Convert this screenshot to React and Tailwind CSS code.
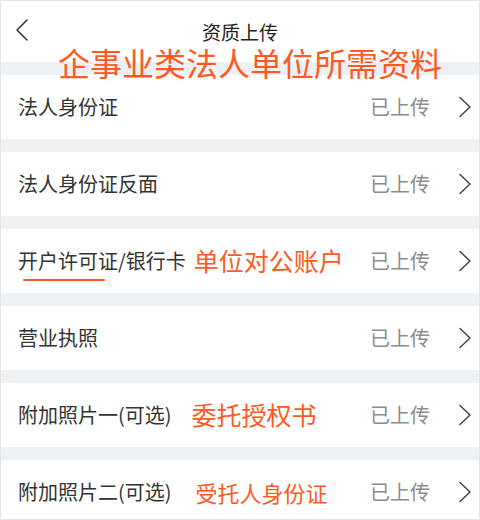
import React from "react";

const rows = [
  { label: "法人身份证" },
  { label: "法人身份证反面" },
  { label: "开户许可证/银行卡", note: "单位对公账户", noteClass: "ml-[8px] text-[25px]", underline: true },
  { label: "营业执照" },
  { label: "附加照片一(可选)", note: "委托授权书", noteClass: "ml-[20px] text-[25px]" },
  { label: "附加照片二(可选)", note: "受托人身份证", noteClass: "ml-[24px] text-[22px]" },
];

const Chevron = ({ left, className }) => (
  <svg
    width="14"
    height="22"
    viewBox="0 0 14 22"
    fill="none"
    stroke="currentColor"
    strokeWidth="1.5"
    strokeLinecap="round"
    strokeLinejoin="round"
    className={className}
  >
    {left ? <path d="M12 1 L2 11 L12 21" /> : <path d="M2 1.5 L12 11 L2 20.5" />}
  </svg>
);

const Row = ({ item }) => (
  <div className="h-[64px] bg-white flex items-center pl-[17px] pr-[7px]">
    <span className="relative text-[20px] text-[#333]">
      {item.label}
      {item.underline && (
        <span className="absolute left-[5px] top-[33px] w-[82px] h-[2px] rounded-full bg-[#fe5a23]" />
      )}
    </span>
    {item.note && <span className={`text-[#fe5a23] ${item.noteClass}`}>{item.note}</span>}
    <span className="ml-auto text-[20px] text-[#8c8c8c]">已上传</span>
    <Chevron className="ml-[28px] text-[#444]" />
  </div>
);

export default function App() {
  return (
    <div
      className="relative w-[480px] h-[520px] overflow-hidden bg-[#eef1f4] border border-[#e4e4e4]"
      style={{ fontFamily: '"Noto Sans CJK SC", "Noto Sans", sans-serif' }}
    >
      <div className="relative h-[61px] bg-white flex items-center justify-center">
        <Chevron left className="absolute left-[14px] top-[18px] text-[#333]" />
        <span className="text-[19px] leading-none text-[#222] mt-[-1px]">资质上传</span>
      </div>
      <div className="absolute left-[57px] top-[45px] text-[32px] leading-none text-[#fe5a23] whitespace-nowrap">
        企事业类法人单位所需资料
      </div>
      {rows.map((item, i) => (
        <div key={i}>
          <div className="h-[13px]" />
          <Row item={item} />
        </div>
      ))}
    </div>
  );
}
